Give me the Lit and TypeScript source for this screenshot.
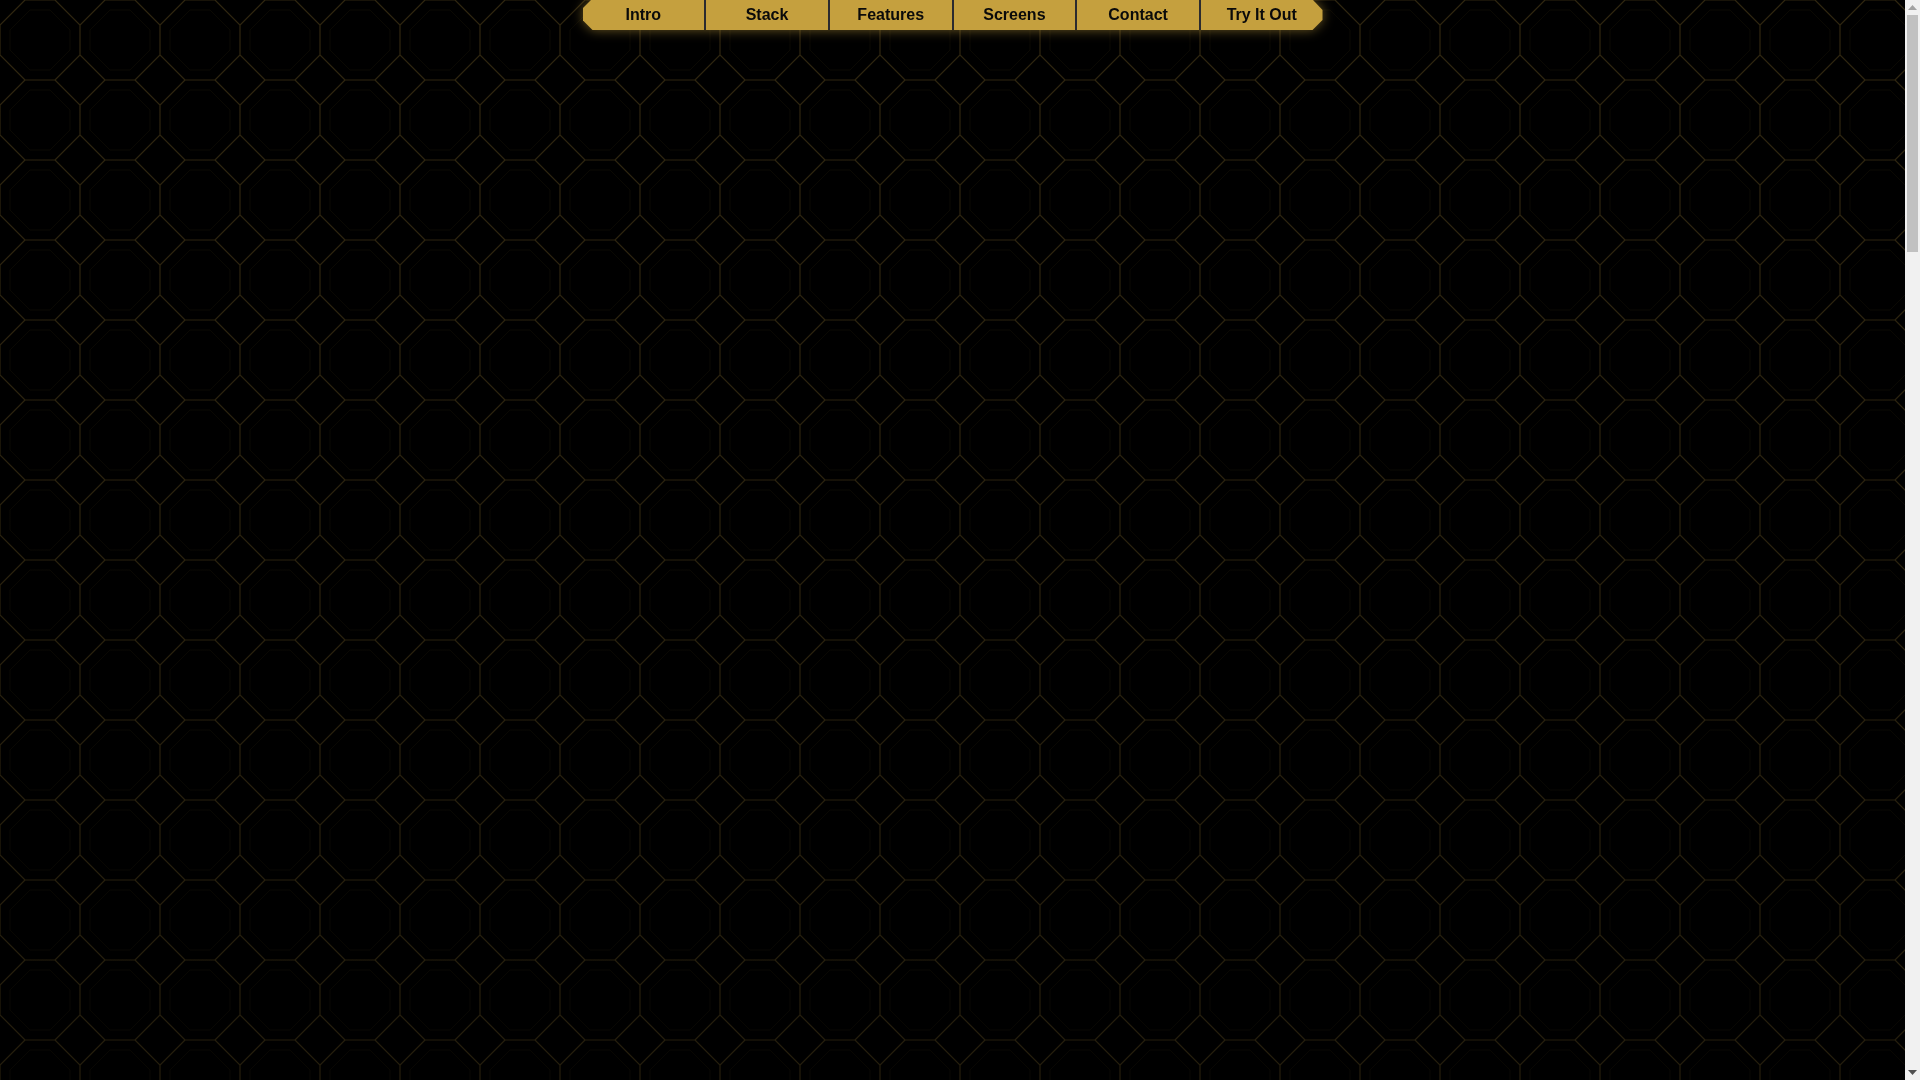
import { LitElement, css, html } from "lit";
import { customElement } from "lit/decorators.js";

const LINKS = ["Intro", "Stack", "Features", "Screens", "Contact", "Try It Out"];

@customElement("app-root")
export class AppRoot extends LitElement {
  static styles = css`
    :host {
      display: block;
      font-family: "Liberation Sans", Arial, sans-serif;
    }
    .shell {
      display: flex;
      height: 100vh;
      overflow: hidden;
    }
    .page {
      flex: 1;
      min-width: 0;
      background-color: #000;
      background-image: linear-gradient(rgba(0, 0, 0, 0), rgba(0, 0, 0, 0.22)),
        url("data:image/svg+xml,%3Csvg xmlns='http://www.w3.org/2000/svg' width='80' height='80' viewBox='0 0 80 80'%3E%3Cg fill='none' stroke='%23c5a03e'%3E%3Cpath stroke-opacity='.24' stroke-width='1.2' d='M25 0H55L80 25V55L55 80H25L0 55V25Z'/%3E%3Cpath stroke-opacity='.07' stroke-width='.8' d='M30 10H50L70 30V50L50 70H30L10 50V30Z'/%3E%3C/g%3E%3C/svg%3E");
      background-size: 100% 100%, 80px 80px;
    }
    .glow {
      width: 740px;
      margin: 0 auto;
      filter: drop-shadow(0 0 6px rgba(197, 160, 62, 0.55));
    }
    nav {
      display: grid;
      grid-template-columns: repeat(6, 123.7px);
      height: 30px;
      background: #c5a03e;
      clip-path: polygon(8.5px 0, calc(100% - 9.5px) 0, 100% 10px, 100% 20px, calc(100% - 10px) 100%, 10px 100%, 0 20px, 0 8.5px);
    }
    a {
      display: flex;
      align-items: center;
      justify-content: center;
      padding-bottom: 1px;
      box-sizing: border-box;
      color: #0a0a0a;
      font-size: 16px;
      font-weight: 700;
      text-decoration: none;
      border-right: 2px solid #2b2b2f;
    }
    .scrollbar {
      flex: 0 0 15px;
      display: flex;
      flex-direction: column;
      background: #f1f1f1;
    }
    .arrow {
      flex: 0 0 15px;
      display: flex;
      align-items: center;
      justify-content: center;
    }
    .arrow svg {
      display: block;
      width: 9px;
      height: 5px;
    }
    .up {
      fill: #a3a3a3;
    }
    .down {
      fill: #505050;
    }
    .thumb {
      flex: 0 0 237px;
      margin: 0 2px;
      background: #c1c1c1;
    }
    .track {
      flex: 1;
    }
  `;

  render() {
    return html`
      <div class="shell">
        <div class="page">
          <div class="glow">
            <nav>${LINKS.map((label) => html`<a href="#">${label}</a>`)}</nav>
          </div>
        </div>
        <div class="scrollbar">
          <div class="arrow up"><svg viewBox="0 0 9 5"><path d="M4.5 0L9 5H0Z" /></svg></div>
          <div class="thumb"></div>
          <div class="track"></div>
          <div class="arrow down"><svg viewBox="0 0 9 5"><path d="M0 0H9L4.5 5Z" /></svg></div>
        </div>
      </div>
    `;
  }
}
